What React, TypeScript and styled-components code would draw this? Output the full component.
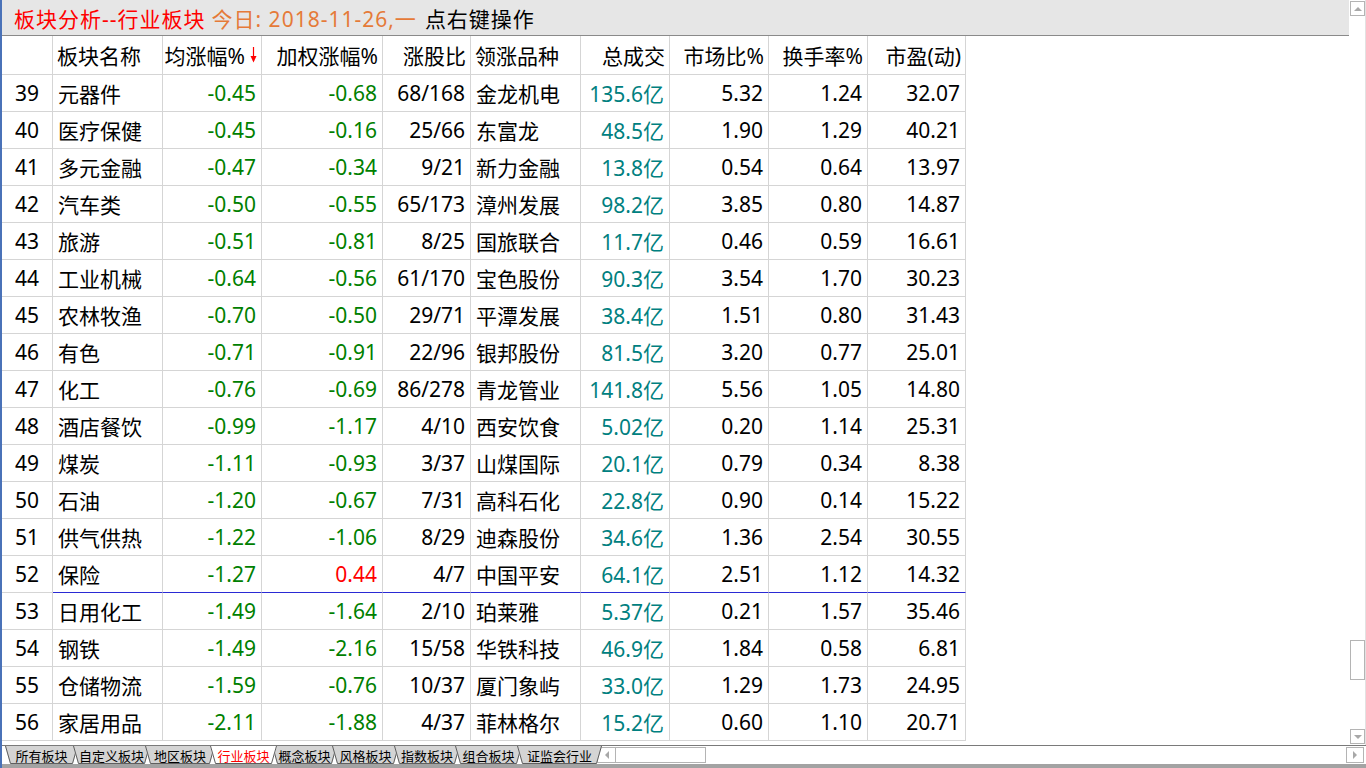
import React from "react";
import styled, { createGlobalStyle } from "styled-components";

const GlobalStyle = createGlobalStyle`
  html, body { margin: 0; padding: 0; background: #ffffff; overflow: hidden; }
  * { box-sizing: border-box; }
`;

const FONT = `"Noto Sans", "Noto Sans CJK SC", sans-serif`;
const GRID = "#d5d5d5";
const GREEN = "#008000";
const RED = "#ff0000";
const TEAL = "#008080";

const COLS = [51, 110, 99, 121, 88, 110, 89, 99, 99, 98];
const gridCols = COLS.map((c) => `${c}px`).join(" ");

type Align = "left" | "right" | "center";

const Page = styled.div`
  width: 1366px;
  height: 768px;
  display: flex;
  flex-direction: column;
  border-left: 2px solid #4a72b8;
  font-family: ${FONT};
  background: #ffffff;
`;

const Upper = styled.div`
  height: 745px;
  display: flex;
`;

const Content = styled.div`
  flex: 1;
  display: flex;
  flex-direction: column;
  min-width: 0;
`;

const TitleBar = styled.div`
  height: 36px;
  background: #e6e6e6;
  border-bottom: 1px solid #8a8a8a;
  display: flex;
  align-items: center;
  padding-left: 12px;
  font-size: 21px;
  letter-spacing: 1px;
  white-space: nowrap;
`;

const TitleSpan = styled.span<{ $color: string; $gap: number }>`
  color: ${(p) => p.$color};
  margin-left: ${(p) => p.$gap}px;
`;

const Table = styled.div`
  display: flex;
  flex-direction: column;
`;

const Row = styled.div<{ $h: number }>`
  display: grid;
  grid-template-columns: ${gridCols};
  height: ${(p) => p.$h}px;
`;

const Cell = styled.div<{ $align: Align; $color?: string; $marked?: boolean }>`
  display: flex;
  align-items: center;
  justify-content: ${(p) =>
    p.$align === "left" ? "flex-start" : p.$align === "right" ? "flex-end" : "center"};
  padding: 0 5px 0 5px;
  border-right: 1px solid ${GRID};
  border-bottom: 1px solid ${(p) => (p.$marked ? "#2a2ad4" : GRID)};
  color: ${(p) => p.$color || "#000000"};
  font-size: 21px;
  white-space: nowrap;
  overflow: hidden;
`;

const HeadCell = styled(Cell)`
  padding-right: 4px;
  padding-left: 4px;
`;

const SortArrow = styled.svg`
  margin-left: 5px;
  flex: none;
`;

const VScroll = styled.div`
  width: 17px;
  padding-left: 1px;
  border-right: 1px solid #e2e2e2;
  display: flex;
  flex-direction: column;
`;

const ScrollBtn = styled.div<{ $top?: number; $bottom?: number }>`
  width: 15px;
  height: 15px;
  margin-top: ${(p) => p.$top ?? 0}px;
  margin-bottom: ${(p) => p.$bottom ?? 0}px;
  border: 1px solid #b4b4b4;
  background: #ffffff;
  display: flex;
  align-items: center;
  justify-content: center;
`;

const Thumb = styled.div<{ $offset: number }>`
  width: 15px;
  height: 40px;
  margin-top: ${(p) => p.$offset}px;
  border: 1px solid #b4b4b4;
  background: #ffffff;
`;

const Fill = styled.div`
  flex: 1;
`;

const TabBar = styled.div`
  height: 19px;
  border-top: 1px solid #7a7a7a;
  display: flex;
  align-items: flex-start;
  padding-left: 3px;
  background: #ffffff;
`;

const Tab = styled.div<{ $w: number; $active?: boolean }>`
  position: relative;
  width: ${(p) => p.$w}px;
  height: 18px;
  flex: none;
  z-index: ${(p) => (p.$active ? 5 : 1)};
`;

const TabShape = styled.svg`
  position: absolute;
  left: 0;
  top: 0;
  overflow: visible;
`;

const TabLabel = styled.span<{ $w: number; $active?: boolean }>`
  position: relative;
  display: flex;
  justify-content: center;
  align-items: center;
  width: ${(p) => p.$w + 5}px;
  height: 18px;
  font-family: "Noto Sans CJK SC", sans-serif;
  font-size: 13px;
  color: ${(p) => (p.$active ? RED : "#000000")};
  white-space: nowrap;
`;

const HScroll = styled.div`
  width: 109px;
  height: 16px;
  margin-top: 1px;
  border: 1px solid #b4b4b4;
  display: flex;
  flex: none;
`;

const HScrollArrow = styled.div`
  width: 18px;
  border-right: 1px solid #b4b4b4;
  display: flex;
  align-items: center;
  justify-content: center;
`;

const CornerBtn = styled.div`
  width: 18px;
  height: 16px;
  margin-top: 1px;
  margin-right: 2px;
  border: 1px solid #b4b4b4;
  display: flex;
  align-items: center;
  justify-content: center;
  flex: none;
`;

const BottomBand = styled.div`
  height: 4px;
  background: #a3a3a3;
`;

type RowData = [number, string, string, string, string, string, string, string, string, string];

const rows: RowData[] = [
  [39, "元器件", "-0.45", "-0.68", "68/168", "金龙机电", "135.6亿", "5.32", "1.24", "32.07"],
  [40, "医疗保健", "-0.45", "-0.16", "25/66", "东富龙", "48.5亿", "1.90", "1.29", "40.21"],
  [41, "多元金融", "-0.47", "-0.34", "9/21", "新力金融", "13.8亿", "0.54", "0.64", "13.97"],
  [42, "汽车类", "-0.50", "-0.55", "65/173", "漳州发展", "98.2亿", "3.85", "0.80", "14.87"],
  [43, "旅游", "-0.51", "-0.81", "8/25", "国旅联合", "11.7亿", "0.46", "0.59", "16.61"],
  [44, "工业机械", "-0.64", "-0.56", "61/170", "宝色股份", "90.3亿", "3.54", "1.70", "30.23"],
  [45, "农林牧渔", "-0.70", "-0.50", "29/71", "平潭发展", "38.4亿", "1.51", "0.80", "31.43"],
  [46, "有色", "-0.71", "-0.91", "22/96", "银邦股份", "81.5亿", "3.20", "0.77", "25.01"],
  [47, "化工", "-0.76", "-0.69", "86/278", "青龙管业", "141.8亿", "5.56", "1.05", "14.80"],
  [48, "酒店餐饮", "-0.99", "-1.17", "4/10", "西安饮食", "5.02亿", "0.20", "1.14", "25.31"],
  [49, "煤炭", "-1.11", "-0.93", "3/37", "山煤国际", "20.1亿", "0.79", "0.34", "8.38"],
  [50, "石油", "-1.20", "-0.67", "7/31", "高科石化", "22.8亿", "0.90", "0.14", "15.22"],
  [51, "供气供热", "-1.22", "-1.06", "8/29", "迪森股份", "34.6亿", "1.36", "2.54", "30.55"],
  [52, "保险", "-1.27", "0.44", "4/7", "中国平安", "64.1亿", "2.51", "1.12", "14.32"],
  [53, "日用化工", "-1.49", "-1.64", "2/10", "珀莱雅", "5.37亿", "0.21", "1.57", "35.46"],
  [54, "钢铁", "-1.49", "-2.16", "15/58", "华铁科技", "46.9亿", "1.84", "0.58", "6.81"],
  [55, "仓储物流", "-1.59", "-0.76", "10/37", "厦门象屿", "33.0亿", "1.29", "1.73", "24.95"],
  [56, "家居用品", "-2.11", "-1.88", "4/37", "菲林格尔", "15.2亿", "0.60", "1.10", "20.71"],
];

const headers: { label: string; align: Align }[] = [
  { label: "", align: "center" },
  { label: "板块名称", align: "left" },
  { label: "均涨幅%", align: "right" },
  { label: "加权涨幅%", align: "right" },
  { label: "涨股比", align: "right" },
  { label: "领涨品种", align: "left" },
  { label: "总成交", align: "right" },
  { label: "市场比%", align: "right" },
  { label: "换手率%", align: "right" },
  { label: "市盈(动)", align: "right" },
];

const tabs: { label: string; w: number; active?: boolean }[] = [
  { label: "所有板块", w: 68 },
  { label: "自定义板块", w: 72 },
  { label: "地区板块", w: 65 },
  { label: "行业板块", w: 62, active: true },
  { label: "概念板块", w: 60 },
  { label: "风格板块", w: 62 },
  { label: "指数板块", w: 61 },
  { label: "组合板块", w: 62 },
  { label: "证监会行业", w: 80 },
];

const signColor = (v: string) => (v.startsWith("-") ? GREEN : RED);

const Triangle: React.FC<{ dir: "up" | "down" | "left" | "right" }> = ({ dir }) => {
  const pts = {
    up: "0,4 4,0 8,4",
    down: "0,0 8,0 4,4",
    left: "4,0 4,8 0,4",
    right: "0,0 0,8 4,4",
  }[dir];
  const vertical = dir === "up" || dir === "down";
  return (
    <svg width={vertical ? 8 : 4} height={vertical ? 4 : 8} viewBox={vertical ? "0 0 8 4" : "0 0 4 8"}>
      <polygon points={pts} fill="#a8a8a8" />
    </svg>
  );
};

const TabItem: React.FC<{ label: string; w: number; active?: boolean }> = ({ label, w, active }) => {
  const h = 17.5;
  return (
    <Tab $w={w} $active={active}>
      <TabShape width={w + 6} height={18}>
        <polygon points={`0,0 ${w + 5},0 ${w},${h} 5,${h}`} fill={active ? "#ffffff" : "#d4d4d4"} />
        <polyline
          points={`0.5,0 5.5,${h} ${w - 0.5},${h} ${w + 4.5},0`}
          fill="none"
          stroke="#5f5f5f"
          strokeWidth={1}
        />
      </TabShape>
      <TabLabel $w={w} $active={active}>
        {label}
      </TabLabel>
    </Tab>
  );
};

export default function App() {
  return (
    <>
      <GlobalStyle />
      <Page>
        <Upper>
          <Content>
            <TitleBar>
              <TitleSpan $color={RED} $gap={0}>板块分析--行业板块</TitleSpan>
              <TitleSpan $color="#e57a38" $gap={6}>今日: 2018-11-26,一</TitleSpan>
              <TitleSpan $color="#000000" $gap={8}>点右键操作</TitleSpan>
            </TitleBar>
            <Table>
              <Row $h={39}>
                {headers.map((h, i) => (
                  <HeadCell key={i} $align={h.align}>
                    {h.label}
                    {i === 2 && (
                      <SortArrow width={7} height={16} viewBox="0 0 7 16">
                        <line x1={3.5} y1={0} x2={3.5} y2={14} stroke={RED} strokeWidth={1.2} />
                        <polygon points="0.5,9 6.5,9 3.5,15.5" fill={RED} />
                      </SortArrow>
                    )}
                  </HeadCell>
                ))}
              </Row>
              {rows.map((r) => {
                const marked = r[0] === 52;
                return (
                  <Row key={r[0]} $h={37}>
                    <Cell $align="center">{r[0]}</Cell>
                    <Cell $align="left" $marked={marked}>{r[1]}</Cell>
                    <Cell $align="right" $color={signColor(r[2])} $marked={marked}>{r[2]}</Cell>
                    <Cell $align="right" $color={signColor(r[3])} $marked={marked}>{r[3]}</Cell>
                    <Cell $align="right" $marked={marked}>{r[4]}</Cell>
                    <Cell $align="left" $marked={marked}>{r[5]}</Cell>
                    <Cell $align="right" $color={TEAL} $marked={marked}>{r[6]}</Cell>
                    <Cell $align="right" $marked={marked}>{r[7]}</Cell>
                    <Cell $align="right" $marked={marked}>{r[8]}</Cell>
                    <Cell $align="right" $marked={marked}>{r[9]}</Cell>
                  </Row>
                );
              })}
            </Table>
          </Content>
          <VScroll>
            <ScrollBtn $top={1}>
              <Triangle dir="up" />
            </ScrollBtn>
            <Thumb $offset={624} />
            <Fill />
            <ScrollBtn $bottom={1}>
              <Triangle dir="down" />
            </ScrollBtn>
          </VScroll>
        </Upper>
        <TabBar>
          {tabs.map((t) => (
            <TabItem key={t.label} {...t} />
          ))}
          <HScroll>
            <HScrollArrow>
              <Triangle dir="left" />
            </HScrollArrow>
          </HScroll>
          <Fill />
          <CornerBtn>
            <Triangle dir="right" />
          </CornerBtn>
        </TabBar>
        <BottomBand />
      </Page>
    </>
  );
}
